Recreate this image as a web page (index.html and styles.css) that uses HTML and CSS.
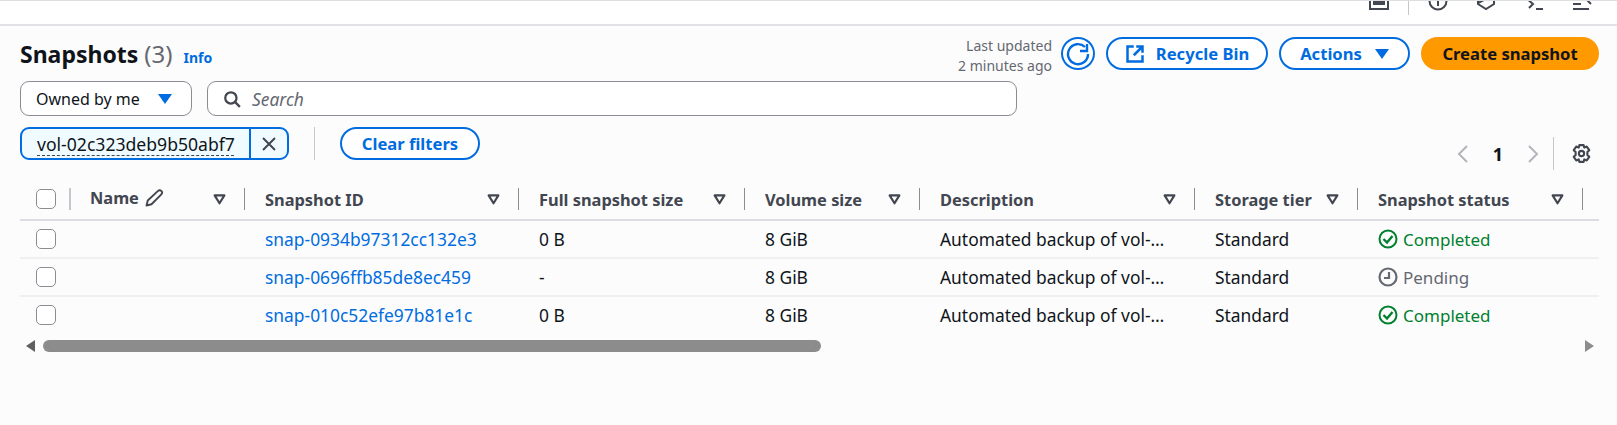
FILE: index.html
```html
<!DOCTYPE html>
<html lang="en">
<head>
	<meta charset="UTF-8">
	<title>Snapshots</title>
	<link rel="stylesheet" href="styles.css">
</head>
<body>
	<header class="topbar">
		<svg class="top-icon" viewBox="0 0 20 20"><rect x="1" y="-10" width="18" height="18" fill="none" stroke="#424650" stroke-width="2"/><rect x="4" y="-8" width="12" height="12" fill="#424650"/></svg>
		<span class="top-sep"></span>
		<svg class="top-icon" viewBox="0 0 20 20"><circle cx="10" cy="0" r="8.5" fill="none" stroke="#424650" stroke-width="2"/><path d="M10 -3V5" stroke="#424650" stroke-width="2"/></svg>
		<svg class="top-icon" viewBox="0 0 20 20"><path d="M2 -6V3L10 8L18 3V-6" fill="none" stroke="#424650" stroke-width="2"/><path d="M2 2L12 -3" stroke="#424650" stroke-width="2"/></svg>
		<svg class="top-icon" viewBox="0 0 20 20"><path d="M2 -3L9 3L5 7" fill="none" stroke="#424650" stroke-width="2"/><path d="M12 8H19" stroke="#424650" stroke-width="2"/></svg>
		<svg class="top-icon" viewBox="0 0 20 20"><path d="M1 8H17M1 3H9M12 -4L19 3" fill="none" stroke="#424650" stroke-width="2"/></svg>
	</header>

	<main class="page">
		<section class="title-row">
			<div class="title-left">
				<h1>Snapshots <span class="count">(3)</span></h1>
				<a class="info">Info</a>
			</div>
			<div class="title-actions">
				<div class="updated">Last updated<br>2 minutes ago</div>
				<button class="btn btn-icon">
					<svg viewBox="0 0 24 24" width="24" height="24"><path d="M22 12A10 10 0 1 1 19 5" fill="none" stroke="#006ce0" stroke-width="2.4"/><path d="M21 2V9H14" fill="none" stroke="#006ce0" stroke-width="2.4"/></svg>
				</button>
				<button class="btn btn-recycle">
					<svg viewBox="0 0 16 16" width="20" height="20"><path d="M7 2H2V14H14V9M9 2H14V7M14 2L7 9" fill="none" stroke="#006ce0" stroke-width="2"/></svg>
					Recycle Bin
				</button>
				<button class="btn btn-actions">Actions <span class="caret"></span></button>
				<button class="btn btn-primary">Create snapshot</button>
			</div>
		</section>

		<section class="filter-row">
			<div class="select">Owned by me <span class="caret"></span></div>
			<div class="search">
				<svg viewBox="0 0 16 16" width="18" height="18"><circle cx="7" cy="7" r="5" fill="none" stroke="#424650" stroke-width="2"/><path d="M11 11L15 15" stroke="#424650" stroke-width="2"/></svg>
				<span>Search</span>
			</div>
		</section>

		<section class="token-row">
			<div class="token-wrap">
				<div class="token">
					<span class="token-text">vol-02c323deb9b50abf7</span>
					<span class="token-close"><svg viewBox="0 0 16 16" width="16" height="16"><path d="M2 2L14 14M14 2L2 14" stroke="#424650" stroke-width="2"/></svg></span>
				</div>
				<span class="token-sep"></span>
				<button class="btn btn-clear">Clear filters</button>
			</div>
			<div class="pager">
				<svg viewBox="0 0 12 20" width="12" height="20"><path d="M10 2L2 10L10 18" fill="none" stroke="#b4b4bb" stroke-width="2"/></svg>
				<span class="page-num">1</span>
				<svg viewBox="0 0 12 20" width="12" height="20"><path d="M2 2L10 10L2 18" fill="none" stroke="#b4b4bb" stroke-width="2"/></svg>
				<span class="pager-sep"></span>
				<svg viewBox="0 0 20 20" width="21" height="21"><path d="M8 2H12L12.6 4.4L15 3.4L17.4 6.8L15.6 8.6V11.4L17.4 13.2L15 16.6L12.6 15.6L12 18H8L7.4 15.6L5 16.6L2.6 13.2L4.4 11.4V8.6L2.6 6.8L5 3.4L7.4 4.4Z" fill="none" stroke="#424650" stroke-width="2" stroke-linejoin="round"/><circle cx="10" cy="10" r="2.5" fill="none" stroke="#424650" stroke-width="2"/></svg>
			</div>
		</section>

		<table class="snapshots">
			<colgroup>
				<col class="col-sel"><col class="col-name"><col class="col-id"><col class="col-full">
				<col class="col-vol"><col class="col-desc"><col class="col-tier"><col class="col-status"><col class="col-rest">
			</colgroup>
			<thead>
				<tr>
					<th><div class="th-in th-sel"><span class="check"></span><span class="sep"></span></div></th>
					<th><div class="th-in"><span class="th-label th-name">Name <svg viewBox="0 0 16 16" width="20" height="20"><path d="M2 14L3 10L11 2.5C12 1.5 13 1.5 14 2.5C15 3.5 14.5 4.5 13.5 5.5L6 13Z" fill="none" stroke="#424650" stroke-width="1.5" stroke-linejoin="round"/></svg></span><svg class="sort" viewBox="0 0 12 10"><path d="M1.5 1.2H10.5L6 8.5Z" fill="none" stroke="#424650" stroke-width="2" stroke-linejoin="round"/></svg><span class="sep"></span></div></th>
					<th><div class="th-in"><span class="th-label">Snapshot ID</span><svg class="sort" viewBox="0 0 12 10"><path d="M1.5 1.2H10.5L6 8.5Z" fill="none" stroke="#424650" stroke-width="2" stroke-linejoin="round"/></svg><span class="sep"></span></div></th>
					<th><div class="th-in"><span class="th-label">Full snapshot size</span><svg class="sort" viewBox="0 0 12 10"><path d="M1.5 1.2H10.5L6 8.5Z" fill="none" stroke="#424650" stroke-width="2" stroke-linejoin="round"/></svg><span class="sep"></span></div></th>
					<th><div class="th-in"><span class="th-label">Volume size</span><svg class="sort" viewBox="0 0 12 10"><path d="M1.5 1.2H10.5L6 8.5Z" fill="none" stroke="#424650" stroke-width="2" stroke-linejoin="round"/></svg><span class="sep"></span></div></th>
					<th><div class="th-in"><span class="th-label">Description</span><svg class="sort" viewBox="0 0 12 10"><path d="M1.5 1.2H10.5L6 8.5Z" fill="none" stroke="#424650" stroke-width="2" stroke-linejoin="round"/></svg><span class="sep"></span></div></th>
					<th><div class="th-in"><span class="th-label">Storage tier</span><svg class="sort" viewBox="0 0 12 10"><path d="M1.5 1.2H10.5L6 8.5Z" fill="none" stroke="#424650" stroke-width="2" stroke-linejoin="round"/></svg><span class="sep"></span></div></th>
					<th><div class="th-in"><span class="th-label">Snapshot status</span><svg class="sort" viewBox="0 0 12 10"><path d="M1.5 1.2H10.5L6 8.5Z" fill="none" stroke="#424650" stroke-width="2" stroke-linejoin="round"/></svg><span class="sep"></span></div></th>
					<th></th>
				</tr>
			</thead>
			<tbody>
				<tr>
					<td class="td-sel"><span class="check"></span></td>
					<td></td>
					<td><a class="link">snap-0934b97312cc132e3</a></td>
					<td>0 B</td>
					<td>8 GiB</td>
					<td>Automated backup of vol-…</td>
					<td>Standard</td>
					<td><span class="status ok"><svg viewBox="0 0 20 20" width="20" height="20"><circle cx="10" cy="10" r="8.5" fill="none" stroke="#00802f" stroke-width="2"/><path d="M5.5 10L9 13.5L14.5 7" fill="none" stroke="#00802f" stroke-width="2.4"/></svg>Completed</span></td>
					<td></td>
				</tr>
				<tr>
					<td class="td-sel"><span class="check"></span></td>
					<td></td>
					<td><a class="link">snap-0696ffb85de8ec459</a></td>
					<td>-</td>
					<td>8 GiB</td>
					<td>Automated backup of vol-…</td>
					<td>Standard</td>
					<td><span class="status wait"><svg viewBox="0 0 20 20" width="20" height="20"><circle cx="10" cy="10" r="8.5" fill="none" stroke="#656871" stroke-width="2.2"/><path d="M11 5V11H6" fill="none" stroke="#656871" stroke-width="2.2"/></svg>Pending</span></td>
					<td></td>
				</tr>
				<tr>
					<td class="td-sel"><span class="check"></span></td>
					<td></td>
					<td><a class="link">snap-010c52efe97b81e1c</a></td>
					<td>0 B</td>
					<td>8 GiB</td>
					<td>Automated backup of vol-…</td>
					<td>Standard</td>
					<td><span class="status ok"><svg viewBox="0 0 20 20" width="20" height="20"><circle cx="10" cy="10" r="8.5" fill="none" stroke="#00802f" stroke-width="2"/><path d="M5.5 10L9 13.5L14.5 7" fill="none" stroke="#00802f" stroke-width="2.4"/></svg>Completed</span></td>
					<td></td>
				</tr>
			</tbody>
		</table>

		<div class="hscroll">
			<span class="arrow arrow-left"></span>
			<div class="track"><div class="thumb"></div></div>
			<span class="arrow arrow-right"></span>
		</div>
	</main>
</body>
</html>
```

FILE: styles.css
```css
html, body {
	margin: 0;
	height: 100%;
	overflow: hidden;
}
body {
	font-family: "Noto Sans", "Open Sans", sans-serif;
	font-size: 16px;
	color: #0f141a;
	background-color: #fcfcfc;
}

.topbar {
	height: 23px;
	background-color: #fff;
	border-top: 1px solid #dedee3;
	border-bottom: 2px solid #e2e2e6;
	display: flex;
	align-items: flex-start;
	padding-left: 1369px;
	gap: 28px;
	overflow: hidden;
}
.top-icon {
	width: 20px;
	height: 20px;
	flex: none;
}
.top-sep {
	width: 1px;
	height: 14px;
	background-color: #c6c6cd;
	flex: none;
	margin: 0 -9px;
}

.page {
	padding: 0 18px 0 20px;
}
.title-row {
	display: flex;
	justify-content: space-between;
	align-items: flex-start;
	padding-top: 11px;
	height: 44px;
}
.title-left {
	display: flex;
	align-items: baseline;
	gap: 11px;
	padding-top: 2px;
}
h1 {
	margin: 0;
	font-size: 23px;
	font-weight: 700;
	line-height: 30px;
}
.count {
	font-size: 24px;
	font-weight: 400;
	color: #656871;
}
.info {
	font-size: 14px;
	font-weight: 700;
	color: #006ce0;
}
.title-actions {
	display: flex;
	align-items: flex-start;
	gap: 11px;
}
.updated {
	font-size: 14px;
	line-height: 20px;
	color: #656871;
	text-align: right;
	margin-right: -2px;
	margin-top: -1px;
}
.btn {
	font-family: inherit;
	font-size: 16.6px;
	font-weight: 700;
	height: 33px;
	box-sizing: border-box;
	border: 2px solid #006ce0;
	border-radius: 17px;
	background-color: #fff;
	color: #006ce0;
	display: inline-flex;
	align-items: center;
	justify-content: center;
	padding: 0;
	white-space: nowrap;
}
.btn-icon {
	width: 34px;
	border-radius: 50%;
}
.btn-recycle {
	width: 162px;
	gap: 11px;
}
.btn-actions {
	width: 131px;
	gap: 13px;
}
.btn-primary {
	width: 178px;
	background-color: #ff9900;
	border-color: #ff9900;
	color: #0f141a;
}
.btn-clear {
	width: 140px;
}
.caret {
	width: 0;
	height: 0;
	border-left: 7px solid transparent;
	border-right: 7px solid transparent;
	border-top: 10px solid #006ce0;
	display: inline-block;
}

.filter-row {
	display: flex;
	gap: 15px;
	padding-right: 582px;
}
.select, .search {
	height: 35px;
	box-sizing: border-box;
	border: 1px solid #8c8c94;
	border-radius: 9px;
	background-color: #fff;
	display: flex;
	align-items: center;
}
.select {
	width: 172px;
	padding-left: 15px;
	gap: 18px;
	white-space: nowrap;
}
.search {
	flex: 1;
	padding-left: 15px;
	gap: 11px;
	font-size: 17.4px;
	font-style: italic;
	color: #656871;
}

.token-row {
	display: flex;
	justify-content: space-between;
	align-items: flex-start;
	margin-top: 11px;
}
.token-wrap {
	display: flex;
	align-items: center;
}
.token {
	width: 269px;
	height: 33px;
	box-sizing: border-box;
	border: 2px solid #006ce0;
	border-radius: 9px;
	background-color: #f0fbff;
	display: flex;
	align-items: center;
}
.token-text {
	flex: 1;
	padding-left: 15px;
	font-size: 17.6px;
	white-space: nowrap;
	line-height: 20px;
	text-decoration: underline dashed #424650 1px;
	text-underline-offset: 4px;
}
.token-close {
	width: 36px;
	height: 100%;
	border-left: 2px solid #006ce0;
	display: flex;
	align-items: center;
	justify-content: center;
}
.token-sep {
	width: 1px;
	height: 33px;
	background-color: #c6c6cd;
	margin: 0 25px;
}
.pager {
	display: flex;
	align-items: center;
	height: 33px;
	margin-top: 10px;
	padding-right: 7px;
}
.page-num {
	font-weight: 700;
	font-size: 18px;
	width: 58px;
	text-align: center;
}
.pager-sep {
	width: 1px;
	height: 33px;
	background-color: #c6c6cd;
	margin: 0 17px 0 14px;
}

.snapshots {
	table-layout: fixed;
	width: 1579px;
	border-collapse: separate;
	border-spacing: 0;
	margin-top: 18px;
}
.col-sel { width: 50px; }
.col-name { width: 175px; }
.col-id { width: 274px; }
.col-full { width: 226px; }
.col-vol { width: 175px; }
.col-desc { width: 275px; }
.col-tier { width: 163px; }
.col-status { width: 225px; }
.col-rest { width: 16px; }

th {
	height: 33px;
	box-sizing: border-box;
	padding: 0;
	border-bottom: 2px solid #dcdce2;
	text-align: left;
	font-size: 16.4px;
	font-weight: 700;
	color: #424650;
	vertical-align: top;
}
.th-in {
	display: flex;
	align-items: center;
	height: 22px;
	padding-left: 20px;
	white-space: nowrap;
}
.th-sel {
	padding-left: 16px;
}
.th-label {
	flex: 1;
}
.th-name {
	display: flex;
	align-items: center;
	gap: 5px;
	margin-top: -3px;
}
.sort {
	width: 13px;
	height: 11px;
	margin-right: 18px;
	flex: none;
}
.sep {
	width: 1.5px;
	height: 22px;
	background-color: #8c8c94;
	flex: none;
}
.th-sel .sep {
	margin-left: 13px;
	background-color: #c6c6cd;
}
.check {
	display: block;
	width: 20px;
	height: 20px;
	box-sizing: border-box;
	border: 1px solid #8c8c94;
	border-radius: 5px;
	background-color: #fff;
	flex: none;
}
td {
	height: 38px;
	padding: 0 0 0 20px;
	border-bottom: 2px solid #f0f0f2;
	font-size: 17.4px;
	white-space: nowrap;
	box-sizing: border-box;
}
tbody tr:last-child td {
	border-bottom-color: transparent;
}
.td-sel {
	padding-left: 16px;
}
.link {
	color: #006ce0;
}
.status {
	display: flex;
	align-items: center;
	gap: 5px;
	font-size: 17px;
}
.ok {
	color: #00802f;
}
.wait {
	color: #656871;
}

.hscroll {
	display: flex;
	align-items: center;
	margin-top: 5px;
	width: 1574px;
	height: 12px;
	padding-left: 6px;
	box-sizing: border-box;
}
.arrow {
	width: 0;
	height: 0;
	flex: none;
	border-top: 6px solid transparent;
	border-bottom: 6px solid transparent;
}
.arrow-left {
	border-right: 9px solid #5f5f5f;
}
.arrow-right {
	border-left: 9px solid #8c8c8c;
}
.track {
	flex: 1;
	margin: 0 8px;
}
.thumb {
	width: 778px;
	height: 12px;
	border-radius: 6px;
	background-color: #8c8c8c;
}
```
